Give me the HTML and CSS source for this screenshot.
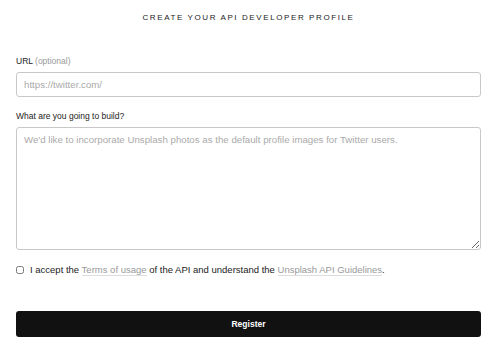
FILE: index.html
```html
<!DOCTYPE html>
<html>
<head>
    <meta charset="utf-8">
    <title>Create your API developer profile</title>
    <link rel="stylesheet" href="styles.css">
</head>
<body>
  <div class="profile_form">
    <h1 class="form_title">Create your API developer profile</h1>

    <div class="field">
      <label class="field_label">URL <span class="optional">(optional)</span></label>
      <input class="text_input" type="text" placeholder="https://twitter.com/">
    </div>

    <div class="field">
      <label class="field_label">What are you going to build?</label>
      <textarea class="text_area" placeholder="We'd like to incorporate Unsplash photos as the default profile images for Twitter users."></textarea>
    </div>

    <label class="accept_row">
      <input class="accept_box" type="checkbox">
      <span>I accept the <a href="#">Terms of usage</a> of the API and understand the <a href="#">Unsplash API Guidelines</a>.</span>
    </label>

    <button class="register_btn" type="button">Register</button>
  </div>
</body>
</html>
```

FILE: styles.css
```css
body{
    margin: 0;
    background: #fff;
    font-family: "Liberation Sans", Arial, sans-serif;
    color: #111;
}
.profile_form{
    padding: 12px 15px 0 16px;
}
.form_title{
    margin: 0 0 32px;
    text-align: center;
    font-size: 8px;
    font-weight: normal;
    letter-spacing: 1.6px;
    text-transform: uppercase;
    line-height: 12px;
    color: #222;
}
.field{
    margin-bottom: 14px;
}
.field_label{
    display: block;
    font-size: 8.5px;
    line-height: 11px;
    margin-bottom: 5px;
    color: #222;
}
.optional{
    color: #999;
}
.text_input,
.text_area{
    display: block;
    box-sizing: border-box;
    width: 100%;
    border: 1px solid #c8c8c8;
    border-radius: 3px;
    padding: 0 7px;
    font-family: inherit;
    font-size: 9.7px;
    color: #111;
    background: #fff;
}
.text_input{
    height: 25px;
}
.text_area{
    height: 123px;
    padding-top: 6px;
    resize: vertical;
}
.text_input::placeholder,
.text_area::placeholder{
    color: #aaa;
}
.accept_row{
    display: flex;
    align-items: center;
    gap: 6px;
    font-size: 9.5px;
    color: #222;
}
.accept_box{
    margin: 0;
    width: 8px;
    height: 8px;
}
.accept_row a{
    color: #999;
    text-decoration: none;
    border-bottom: 1px solid #ddd;
}
.register_btn{
    display: block;
    width: 100%;
    height: 26px;
    margin-top: 36px;
    border: 0;
    border-radius: 3px;
    background: #111;
    color: #fff;
    font-family: inherit;
    font-size: 8.5px;
    font-weight: bold;
}
```
